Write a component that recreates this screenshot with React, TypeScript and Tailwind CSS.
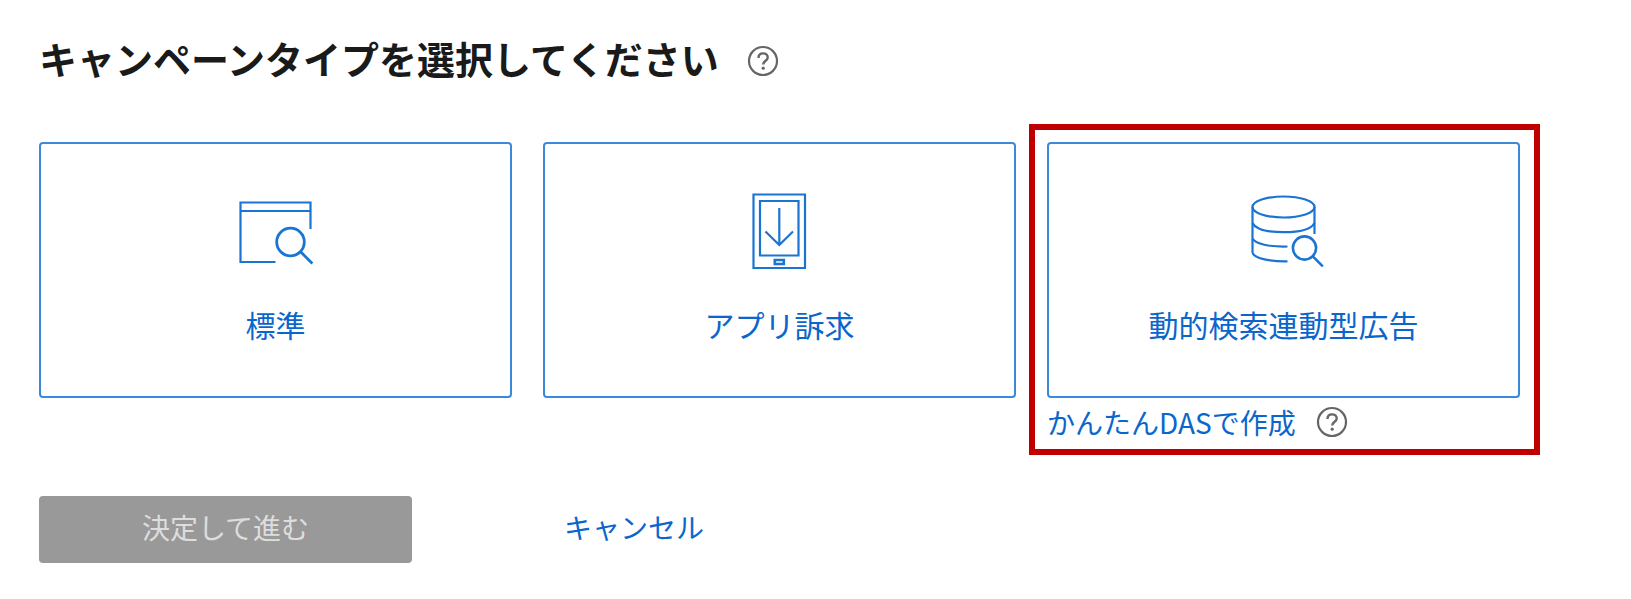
import type { ReactNode } from "react";

const HelpButton = ({ label }: { label: string }) => {
  return (
    <button type="button" aria-label={label} className="shrink-0 text-[#666]">
      <svg width="32" height="32" viewBox="0 0 32 32" fill="none" stroke="currentColor">
        <circle cx="16" cy="16" r="14" strokeWidth="2.200" />
        <path d="M11.500 13c0-3 2-4.600 4.600-4.600s4.600 1.600 4.600 4c0 3.400-4.500 3.400-4.500 7.200" strokeWidth="2.400" />
        <circle cx="16.200" cy="23.200" r="1.600" fill="currentColor" stroke="none" />
      </svg>
    </button>
  );
};

const StandardIcon = () => (
  <svg width="80" height="80" viewBox="0 0 80 80" fill="none" stroke="currentColor" strokeWidth="2.200">
    <path d="M39.500 72H4.500V12.500h70v26.500M4.500 21h70" />
    <circle cx="54.500" cy="52" r="13.800" strokeWidth="2.800" />
    <path d="M64.300 61.500l12 12" strokeWidth="2.800" />
  </svg>
);

const AppIcon = () => (
  <svg width="80" height="80" viewBox="0 0 80 80" fill="none" stroke="currentColor" strokeWidth="2.200">
    <path d="M13.500 4.500h51.500v73.500h-51.500zM20 11h38.500v54.500h-38.500z" />
    <path d="M39.300 18v37M25.500 41.500l13.800 13.500L53 41.500" />
    <path d="M34.800 70h9v4h-9z" strokeWidth="2.600" />
  </svg>
);

const DynamicIcon = () => (
  <svg width="80" height="80" viewBox="0 0 80 80" fill="none" stroke="currentColor" strokeWidth="2.200">
    <ellipse cx="39.500" cy="17" rx="31" ry="10.500" />
    <path d="M8.500 17v45c0 5.500 15 9.800 35 9.400M70.500 17v27" />
    <path d="M8.500 33c3 6 15 9.200 31 9.200S67.500 39 70.500 33M8.500 48.500c3 5.500 17 8.500 35 8" />
    <circle cx="60.500" cy="58" r="11.600" strokeWidth="2.600" />
    <path d="M68.800 66.300l10 10" strokeWidth="2.600" />
  </svg>
);

const TypeCard = ({ label, icon }: { label: string; icon: ReactNode }) => {
  return (
    <button
      type="button"
      className="flex h-64 w-full flex-col items-center rounded border-2 border-[#3c89d9] bg-white pt-[46px] text-[#0b66cc]"
    >
      <span className="text-[#1a75d2]">{icon}</span>
      <span className="mt-9 text-3xl">{label}</span>
    </button>
  );
};

const App = () => {
  return (
    <main className="bg-white pr-[111px] pb-9 pl-[39px] pt-9 font-['Noto_Sans_CJK_JP',sans-serif] text-[28px] leading-10">
      <header className="flex items-center gap-7">
        <h1 className="pb-1.5 text-[38px] leading-11 font-bold text-[#1a1a1a]">
          キャンペーンタイプを選択してください
        </h1>
        <HelpButton label="キャンペーンタイプのヘルプ" />
      </header>

      <section className="mt-14 grid grid-cols-3 items-start gap-[31px]">
        <TypeCard label="標準" icon={<StandardIcon />} />
        <TypeCard label="アプリ訴求" icon={<AppIcon />} />
        <div className="relative">
          <TypeCard label="動的検索連動型広告" icon={<DynamicIcon />} />
          <div className="mt-1 flex items-center gap-5">
            <a href="#das" className="text-[#0b66cc]">
              かんたんDASで作成
            </a>
            <HelpButton label="かんたんDASのヘルプ" />
          </div>
          <div className="pointer-events-none absolute -top-[18px] -right-5 -bottom-[13px] -left-[18px] border-6 border-[#c00000]" />
        </div>
      </section>

      <footer className="mt-[54px] flex items-center gap-[152px]">
        <button type="button" disabled className="h-[67px] w-[373px] rounded bg-[#999] pb-1.5 text-[#ddd]">
          決定して進む
        </button>
        <button type="button" className="pb-1.5 text-[#0b66cc]">
          キャンセル
        </button>
      </footer>
    </main>
  );
};

export default App;
